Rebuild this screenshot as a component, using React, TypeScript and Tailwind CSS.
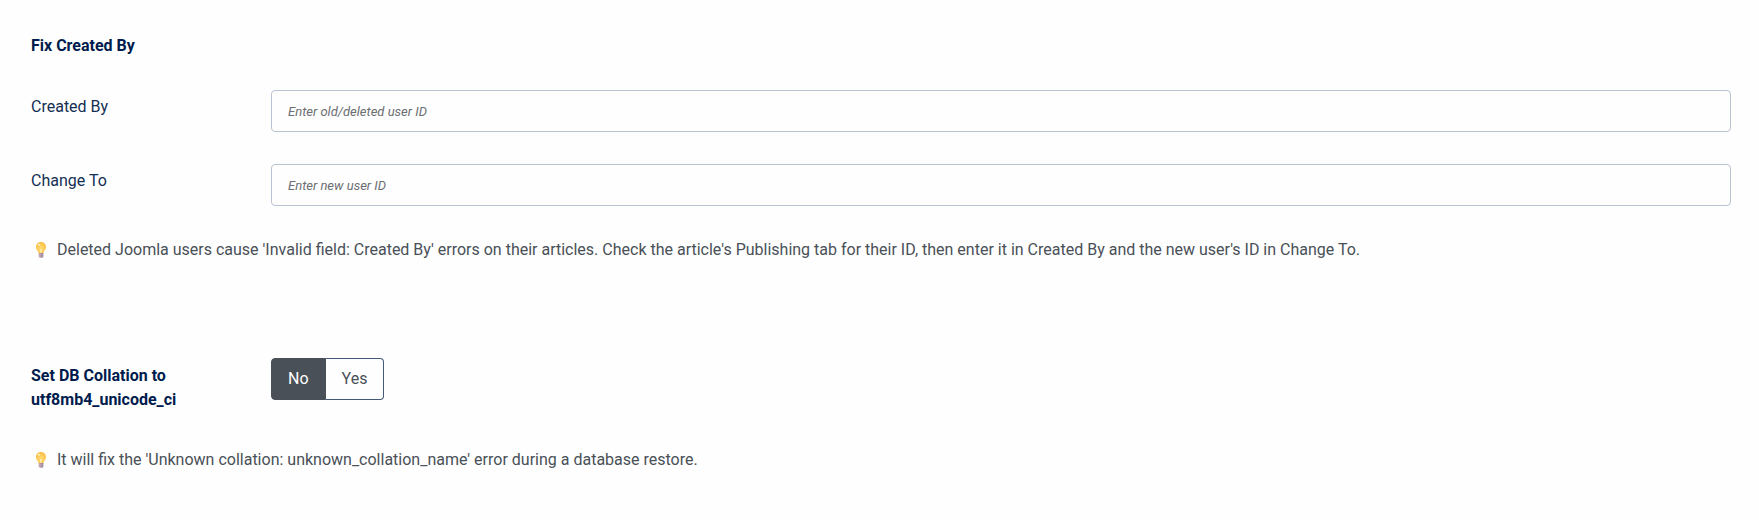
import { useId, useState } from "react";
import type { ReactNode } from "react";

interface TextFieldProps {
  label: string;
  placeholder: string;
}

function TextField({ label, placeholder }: TextFieldProps) {
  const id = useId();

  return (
    <div className="flex items-start">
      <label htmlFor={id} className="w-60 shrink-0 pt-[5px] pr-5 text-[#132f53]">
        {label}
      </label>
      <input
        id={id}
        type="text"
        placeholder={placeholder}
        className="h-[42px] min-w-0 flex-1 rounded border border-[#b9c3d1] bg-[#fefefe] px-4 text-[13px] text-[#22262a] placeholder:text-[#6b6e72] placeholder:italic"
      />
    </div>
  );
}

function BulbIcon() {
  return (
    <svg viewBox="0 0 12 18" className="h-[18px] w-3 shrink-0" aria-hidden="true">
      <defs>
        <radialGradient id="bulb-glass" cx="0.5" cy="0.58" r="0.6">
          <stop offset="0" stopColor="#ffe07a" />
          <stop offset="0.55" stopColor="#fdcb58" />
          <stop offset="1" stopColor="#f9b945" />
        </radialGradient>
        <linearGradient id="bulb-base" x1="0" x2="1">
          <stop offset="0" stopColor="#c9a9a4" />
          <stop offset="0.5" stopColor="#b096a6" />
          <stop offset="1" stopColor="#85738f" />
        </linearGradient>
      </defs>
      <path
        d="M6 1C3.1 1 1 3.2 1 5.900c0 2.100 1.200 3.200 2 4.500.4.700.5 1.300.6 2h4.800c.1-.7.2-1.300.6-2 .8-1.300 2-2.400 2-4.500C11 3.200 8.900 1 6 1z"
        fill="url(#bulb-glass)"
      />
      <path d="M4.500 7l1 .9.500-.7.5.7 1-.9L6.800 12H5.200z" fill="#fff0a6" stroke="#f8b64a" strokeWidth="0.3" />
      <ellipse cx="4" cy="3.800" rx="1.300" ry="0.900" fill="#fff3b8" transform="rotate(-35 4 3.800)" />
      <path d="M3.700 12h4.600v3.200c0 .8-.7 1.300-1.300 1.600H5c-.6-.3-1.300-.8-1.300-1.600z" fill="url(#bulb-base)" />
      <path d="M3.700 13.400h4.600M3.900 15h4.200" stroke="#cbb8c8" strokeWidth="0.4" />
    </svg>
  );
}

function Hint({ children }: { children: ReactNode }) {
  return (
    <div className="flex items-start gap-[10px] pl-1 text-[#495057]">
      <span className="flex h-6 items-center">
        <BulbIcon />
      </span>
      <p>{children}</p>
    </div>
  );
}

const collationOptions = [
  { value: "no", label: "No" },
  { value: "yes", label: "Yes" },
];

export default function App() {
  const [collation, setCollation] = useState("no");

  return (
    <main className="bg-[#fefefe] pt-[34px] pr-7 pb-12 pl-[31px] font-['Roboto',sans-serif] text-base">
      <section>
        <h2 className="mb-8 font-bold text-[#001b4c]">Fix Created By</h2>
        <div className="flex flex-col gap-8">
          <TextField label="Created By" placeholder="Enter old/deleted user ID" />
          <TextField label="Change To" placeholder="Enter new user ID" />
          <Hint>
            Deleted Joomla users cause 'Invalid field: Created By' errors on their articles. Check the article's
            Publishing tab for their ID, then enter it in Created By and the new user's ID in Change To.
          </Hint>
        </div>
      </section>

      <section className="mt-24 flex flex-col gap-9">
        <fieldset className="flex items-start" aria-labelledby="collation-label">
          <div id="collation-label" className="w-60 shrink-0 pt-[6px] pr-5 font-bold text-[#001b4c]">
            Set DB Collation to utf8mb4_unicode_ci
          </div>
          <div className="flex h-[42px]">
            {collationOptions.map((option) => (
              <label
                key={option.value}
                className="relative flex cursor-pointer items-center border border-[#44597a] px-4 text-[#495057] first:rounded-l last:rounded-r last:border-l-0 has-checked:border-[#495057] has-checked:bg-[#495057] has-checked:text-white"
              >
                <input
                  type="radio"
                  name="collation"
                  className="sr-only"
                  checked={collation === option.value}
                  onChange={() => setCollation(option.value)}
                />
                {option.label}
              </label>
            ))}
          </div>
        </fieldset>
        <Hint>It will fix the 'Unknown collation: unknown_collation_name' error during a database restore.</Hint>
      </section>
    </main>
  );
}
